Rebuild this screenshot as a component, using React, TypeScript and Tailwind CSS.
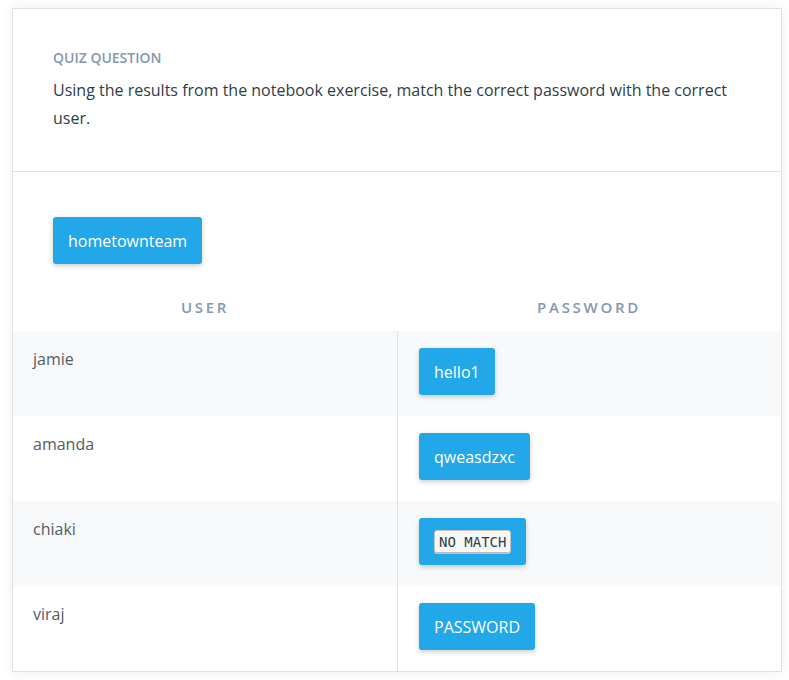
const rows = [
  { user: 'jamie', pass: 'hello1' },
  { user: 'amanda', pass: 'qweasdzxc' },
  { user: 'chiaki', pass: null },
  { user: 'viraj', pass: 'PASSWORD' },
];

function Chip({ children }: { children: React.ReactNode }) {
  return (
    <div className="inline-flex h-[47px] items-center rounded-[3px] bg-[#22a7e9] px-[15px] text-[16px] text-white shadow-[0_2px_5px_rgba(0,0,0,0.2)]">
      {children}
    </div>
  );
}

export default function App() {
  return (
    <div className="min-h-screen bg-white pl-[12px] pr-[7px] pt-[8px] pb-[8px]" style={{ fontFamily: '"Open Sans", sans-serif' }}>
      <div className="border border-[#dbe2e8] bg-white shadow-[0_0_12px_rgba(0,0,0,0.07)]">
        <div className="border-b border-[#dbe2e8] px-[40px] pt-[39px] pb-[39px]">
          <div className="text-[14px] font-semibold leading-[20px] text-[#8497b0]">QUIZ QUESTION</div>
          <p className="mt-[8px] text-[16px] leading-[28px] text-[#2e3d49]">
            Using the results from the notebook exercise, match the correct password with the correct user.
          </p>
        </div>
        <div className="px-[40px] pt-[45px]">
          <Chip>hometownteam</Chip>
        </div>
        <div className="grid grid-cols-2 pt-[30px] pb-[11px] text-center text-[15px] font-semibold tracking-[0.18em] leading-[26px] text-[#8497b0]">
          <div>USER</div>
          <div>PASSWORD</div>
        </div>
        <div>
          {rows.map((r, i) => (
            <div key={r.user} className={'grid h-[85px] grid-cols-2 ' + (i % 2 === 0 ? 'bg-[#f8f9fb]' : 'bg-white')}>
              <div className="px-[20px] pt-[14px] text-[16px] leading-[28px] text-[#525c65]">{r.user}</div>
              <div className="border-l border-[#dbe2e8] px-[21px] pt-[17px]">
                {r.pass ? (
                  <Chip>{r.pass}</Chip>
                ) : (
                  <Chip>
                    <span
                      className="rounded-[3px] border border-[#c4c4c4] bg-[#f7f7f7] px-[4px] text-[14px] font-normal leading-[22px] text-[#2e3d49] shadow-[inset_0_-1px_0_#bbb]"
                      style={{ fontFamily: '"DejaVu Sans Mono", monospace' }}
                    >
                      NO MATCH
                    </span>
                  </Chip>
                )}
              </div>
            </div>
          ))}
        </div>
      </div>
    </div>
  );
}
